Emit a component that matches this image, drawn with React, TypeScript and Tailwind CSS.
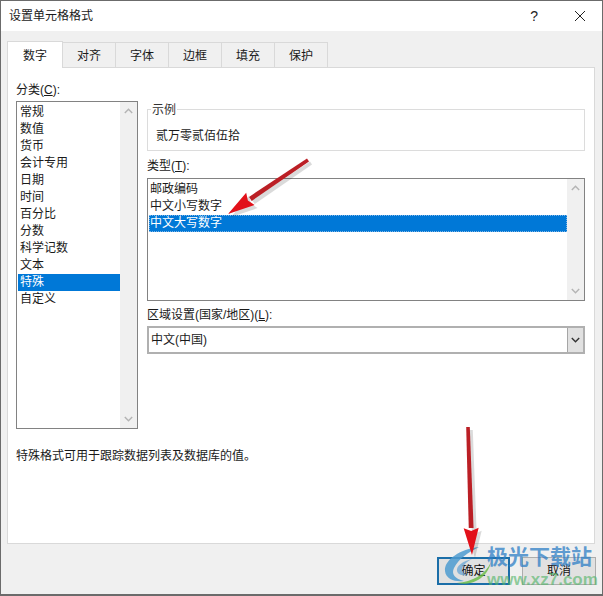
const font = 'font-["Liberation_Sans","Noto_Sans_CJK_SC",sans-serif]';

const categories = ['常规', '数值', '货币', '会计专用', '日期', '时间', '百分比', '分数', '科学记数', '文本', '特殊', '自定义'];
const tabs = ['对齐', '字体', '边框', '填充', '保护'];
const types = ['邮政编码', '中文小写数字', '中文大写数字'];

function Chevron({ up = false, className = 'stroke-[#b4b4b4]' }: { up?: boolean; className?: string }) {
  return (
    <svg width="9" height="6" viewBox="0 0 9 6" fill="none" className={className}>
      <path d={up ? 'M0.8 5 L4.5 1.2 L8.2 5' : 'M0.8 1 L4.5 4.8 L8.2 1'} strokeWidth="1.4" />
    </svg>
  );
}

function ScrollBar() {
  return (
    <div className="w-[17px] shrink-0 bg-[#f0f0f0] flex flex-col justify-between items-center py-[6px]">
      <Chevron up />
      <Chevron />
    </div>
  );
}

function Hotkey({ label, k }: { label: string; k: string }) {
  return (
    <div className="text-[12px] leading-[16px] text-[#1a1a1a] whitespace-nowrap">
      {label}(<span className="underline">{k}</span>):
    </div>
  );
}

function RedArrow({ x1, y1, x2, y2 }: { x1: number; y1: number; x2: number; y2: number }) {
  const dx = x2 - x1;
  const dy = y2 - y1;
  const len = Math.hypot(dx, dy);
  const ux = dx / len;
  const uy = dy / len;
  const hl = 27;
  const hw = 7.5;
  const bx = x2 - ux * hl;
  const by = y2 - uy * hl;
  const nx = -uy;
  const ny = ux;
  const head = `${x2},${y2} ${bx + nx * hw},${by + ny * hw} ${bx + ux * 3},${by + uy * 3} ${bx - nx * hw},${by - ny * hw}`;
  const shaft = `${x1 + nx * 1.8},${y1 + ny * 1.8} ${bx + nx * 2.4},${by + ny * 2.4} ${bx - nx * 2.4},${by - ny * 2.4} ${x1 - nx * 1.8},${y1 - ny * 1.8}`;
  return (
    <g>
      <g transform="translate(3 3)" fill="#000" opacity="0.14">
        <polygon points={shaft} />
        <polygon points={head} />
      </g>
      <polygon points={shaft} fill="#bb1f25" />
      <polygon points={head} fill="#e2111a" />
    </g>
  );
}

export default function App() {
  return (
    <div className={`relative w-[603px] h-[596px] overflow-hidden bg-[#f0f0f0] border border-[#6b6b6b] border-b-2 ${font}`}>
      {/* title bar */}
      <div className="h-[30px] bg-white flex items-center pl-[8px] pr-[16px]">
        <span className="text-[12px] text-[#1a1a1a]">设置单元格格式</span>
        <span className="ml-auto text-[14px] text-[#222] mr-[36px]">?</span>
        <svg width="12" height="12" viewBox="0 0 12 12" className="stroke-[#222]" fill="none">
          <path d="M1 1 L11 11 M11 1 L1 11" strokeWidth="1" />
        </svg>
      </div>

      {/* tabs */}
      <div className="flex items-end h-[36px] pl-[6px]">
        <div className="w-[56px] h-[27px] pt-px bg-white border border-b-0 border-[#d9d9d9] flex items-center justify-center text-[12px] text-[#1a1a1a] relative top-[1px] z-10">
          数字
        </div>
        {tabs.map((t) => (
          <div key={t} className="w-[54px] h-[25px] pt-px -ml-px bg-[#f0f0f0] border border-b-0 border-[#d9d9d9] flex items-center justify-center text-[12px] text-[#1a1a1a]">
            {t}
          </div>
        ))}
      </div>

      {/* panel */}
      <div className="ml-[6px] mr-[7px] h-[477px] bg-white border border-[#d9d9d9] px-[8px] pt-[14px] flex flex-col">
        <div className="flex gap-[9px]">
          {/* category */}
          <div className="w-[122px] shrink-0">
            <div className="h-[19px]"><Hotkey label="分类" k="C" /></div>
            <div className="h-[328px] border border-[#828282] flex">
              <div className="flex-1 pt-[2px] pl-[1px] min-w-0">
                {categories.map((c) => (
                  <div key={c} className={`h-[17px] leading-[17px] text-[12px] pl-[2px] ${c === '特殊' ? 'bg-[#0078d7] text-white' : 'text-[#1a1a1a]'}`}>
                    {c}
                  </div>
                ))}
              </div>
              <ScrollBar />
            </div>
          </div>

          {/* right column */}
          <div className="flex-1 min-w-0 pr-[1px]">
            <div className="mt-[27px] h-[42px] border border-[#dcdcdc] relative px-[8px] pt-[18px] text-[12px] leading-[16px] text-[#1a1a1a]">
              <span className="absolute left-[3px] -top-[8px] bg-white px-px leading-[16px] text-[#333]">示例</span>
              贰万零贰佰伍拾
            </div>
            <div className="mt-[7px] h-[20px]"><Hotkey label="类型" k="T" /></div>
            <div className="h-[123px] border border-[#828282] flex">
              <div className="flex-1 pt-[2px] pl-px min-w-0">
                {types.map((t, i) => (
                  <div key={t} className={`h-[17px] leading-[17px] text-[12px] pl-[1px] ${i === 2 ? 'bg-[#0078d7] text-white outline-1 outline-dotted -outline-offset-1 outline-[#7fb5e6]' : 'text-[#1a1a1a]'}`}>
                    {t}
                  </div>
                ))}
              </div>
              <ScrollBar />
            </div>
            <div className="mt-[6px] h-[19px]"><Hotkey label="区域设置(国家/地区)" k="L" /></div>
            <div className="h-[28px] border-2 border-[#b0b0b0] flex items-center bg-white">
              <span className="pl-[2px] text-[12px] text-[#1a1a1a]">中文(中国)</span>
              <div className="ml-auto w-[16px] h-full bg-[#e1e1e1] border-l border-[#a6a6a6] flex items-center justify-center">
                <Chevron className="stroke-[#333]" />
              </div>
            </div>
          </div>
        </div>
        <div className="mt-[19px] text-[12px] leading-[16px] text-[#1a1a1a]">特殊格式可用于跟踪数据列表及数据库的值。</div>
      </div>

      {/* buttons */}
      <div className="flex justify-end gap-[12px] pr-[6px] pt-[13px]">
        <div className="w-[73px] h-[28px] border-2 border-[#1b6ea8] bg-[#e1e1e1] flex items-center justify-center text-[12px] text-[#111]">确定</div>
        <div className="w-[74px] h-[28px] border border-[#adadad] bg-[#e1e1e1] flex items-center justify-center text-[12px] text-[#111]">取消</div>
      </div>

      {/* watermark */}
      <svg className="absolute -left-px -top-px pointer-events-none" width="603" height="596" viewBox="0 0 603 596" fill="none">
        <path d="M479 547 C460 549 444 560 445 571 C446 580 456 582 464 581 C455 579 451 574 454 568 C459 558 469 552 479 547 Z" fill="#4c9bd0" opacity="0.85" />
        <path d="M472 559 C463 561 456 566 457 571 C458 575 463 576 467 575 C462 573 461 570 463 567 C465 563 468 561 472 559 Z" fill="#6fa9d6" opacity="0.8" />
        <path d="M491 562 C486 574 472 582 457 583 C470 586 487 580 491 562 Z" fill="#6cbd4a" opacity="0.85" />
      </svg>
      <div className="absolute left-[486px] top-[542px] text-[21px] leading-[28px] font-bold text-[#2f7fc6]/75 whitespace-nowrap">极光下载站</div>
      <div className="absolute left-[486px] top-[569px] text-[17px] leading-[20px] font-bold text-[#55b56a]/65 whitespace-nowrap">www.xz7.com</div>

      {/* annotation arrows */}
      <svg className="absolute -left-px -top-px pointer-events-none" width="603" height="596" viewBox="0 0 603 596">
        <RedArrow x1={308} y1={160} x2={228} y2={214} />
        <RedArrow x1={468} y1={427} x2={472} y2={555} />
      </svg>
    </div>
  );
}
